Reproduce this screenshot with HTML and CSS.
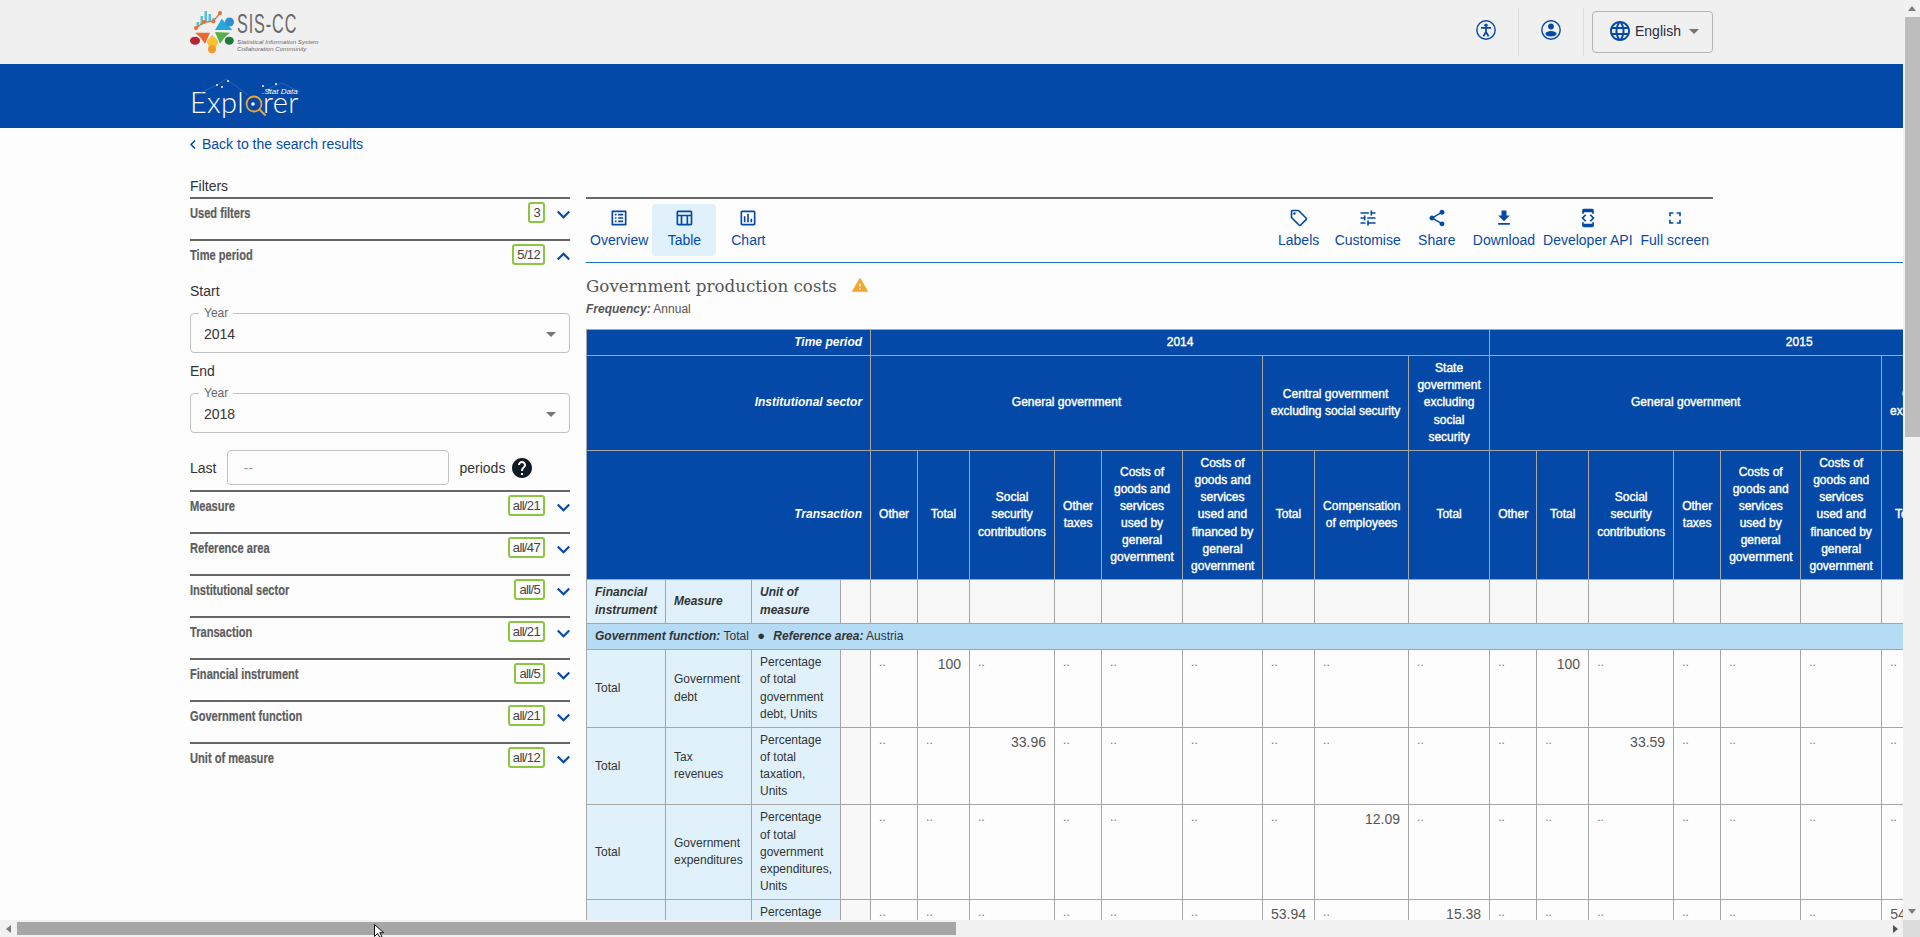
FILE: index.html
```html
<!DOCTYPE html>
<html lang="en">
<head>
  <meta charset="UTF-8">
  <title>Data Explorer - Government production costs</title>
  <link rel="stylesheet" href="styles.css">
</head>
<body>
  <div class="window">
    <div class="page">
      <header class="topbar">
        <div class="brand">
          <svg class="brand-mark" viewBox="188 6 48 48" width="48" height="48">
            <g fill="#58bfd6">
              <rect x="196.5" y="20" width="2.5" height="5"/>
              <rect x="200.5" y="14" width="2.5" height="9"/>
              <rect x="204.5" y="9" width="2.5" height="11"/>
              <rect x="208.5" y="12" width="2.5" height="7"/>
              <rect x="212.500" y="16" width="2.5" height="3"/>
            </g>
            <polyline points="196,26 204,20 213.300,19.300 220,11" fill="none" stroke="#ee6c2f" stroke-width="1.300"/>
            <g fill="#ee6c2f">
              <circle cx="196" cy="26" r="2"/>
              <circle cx="204" cy="20" r="2"/>
              <circle cx="213.300" cy="19.300" r="2"/>
              <circle cx="220" cy="11" r="2"/>
            </g>
            <path d="M215 28l6.700-11.300 5 5.500 5.800 5.800z" fill="#29a8df"/>
            <circle cx="229.500" cy="20" r="4.500" fill="#2f8fd0"/>
            <path d="M195 30.700h15l-5 11-5-6.700z" fill="#ea6a2c"/>
            <ellipse cx="195" cy="38.700" rx="5" ry="4" fill="#b8252f"/>
            <path d="M206.700 39.300l5.600-6.600 6 6.600-2.300 5.700h-7z" fill="#fbc02d"/>
            <circle cx="212" cy="47.300" r="4" fill="#f39a2e"/>
            <path d="M215 30l15 .7-5 4.300-5 6.700z" fill="#55b04a"/>
            <ellipse cx="229.300" cy="38.700" rx="4.500" ry="4" fill="#1f7a3a"/>
          </svg>
          <div class="brand-text">
            <div class="brand-name">SIS-CC</div>
            <div class="brand-sub">Statistical Information System</div>
            <div class="brand-sub">Collaboration Community</div>
          </div>
        </div>
        <div class="top-actions">
          <div class="top-icon">
            <svg viewBox="0 0 24 24" width="24" height="24">
              <circle cx="12" cy="12" r="9.200" fill="none" stroke="#0549a8" stroke-width="1.400"/>
              <circle cx="12" cy="7.300" r="1.700" fill="#0549a8"/>
              <path d="M7 9.800h10M12 9.800v4.200M12 14l-2.600 4.200M12 14l2.600 4.200" fill="none" stroke="#0549a8" stroke-width="1.700"/>
            </svg>
          </div>
          <div class="top-icon">
            <svg viewBox="0 0 24 24" width="24" height="24">
              <circle cx="12" cy="12" r="9.200" fill="none" stroke="#0549a8" stroke-width="1.400"/>
              <circle cx="12" cy="8.500" r="2.900" fill="#0549a8"/>
              <ellipse cx="12" cy="15.800" rx="5.600" ry="2.700" fill="#0549a8"/>
            </svg>
          </div>
          <div class="lang">
            <svg viewBox="0 0 24 24" width="24" height="24" fill="#0549a8"><path d="M11.990 2C6.470 2 2 6.480 2 12s4.470 10 9.990 10C17.520 22 22 17.520 22 12S17.520 2 11.990 2zm6.930 6h-2.950c-.32-1.250-.78-2.450-1.380-3.560 1.840.63 3.370 1.910 4.330 3.560zM12 4.040c.83 1.200 1.480 2.530 1.910 3.960h-3.820c.43-1.430 1.080-2.760 1.910-3.960zM4.260 14C4.100 13.360 4 12.690 4 12s.1-1.360.26-2h3.380c-.08.66-.14 1.320-.14 2 0 .68.06 1.340.14 2H4.260zm.82 2h2.950c.32 1.250.78 2.450 1.380 3.560-1.840-.63-3.370-1.900-4.330-3.560zm2.950-8H5.080c.96-1.660 2.490-2.930 4.330-3.560C8.810 5.550 8.350 6.750 8.030 8zM12 19.960c-.83-1.200-1.480-2.530-1.910-3.960h3.820c-.43 1.430-1.080 2.760-1.910 3.960zM14.340 14H9.660c-.09-.66-.16-1.320-.16-2 0-.68.07-1.350.16-2h4.680c.09.65.16 1.320.16 2 0 .68-.07 1.340-.16 2zm.25 5.560c.6-1.110 1.060-2.310 1.380-3.560h2.950c-.96 1.650-2.490 2.930-4.330 3.560zM16.360 14c.08-.66.14-1.320.14-2 0-.68-.06-1.340-.14-2h3.380c.16.64.26 1.310.26 2s-.1 1.360-.26 2h-3.380z"/></svg>
            <span>English</span>
            <i class="caret"></i>
          </div>
        </div>
      </header>

      <div class="bluebar">
        <div class="explorer">
          <svg class="stars" viewBox="0 0 110 24" width="110" height="24">
            <path d="M6 22L27 12l9-6 22 16M78 16l14-6 24 12" fill="none" stroke="#3f74bf" stroke-width=".6"/>
            <g fill="#fff">
              <circle cx="27" cy="12" r="1"/><circle cx="32" cy="14" r="1"/><circle cx="38" cy="8" r="1"/>
              <circle cx="73" cy="13" r="1"/><circle cx="79" cy="17" r="1"/><circle cx="86" cy="11" r="1"/>
            </g>
          </svg>
          <span class="stat-data">.Stat Data</span>
          <span class="explorer-word">Expl</span>
          <svg class="lens" viewBox="0 0 26 26" width="26" height="26">
            <circle cx="11" cy="10" r="7.500" fill="none" stroke="#eda32f" stroke-width="1.800"/>
            <circle cx="10" cy="10" r="1.800" fill="#fff"/>
            <path d="M16.500 15.500l6 6" stroke="#eda32f" stroke-width="2"/>
          </svg>
          <span class="explorer-word">rer</span>
        </div>
      </div>

      <a class="back" href="#">
        <svg viewBox="8 6 8 12" width="6" height="9"><path d="M15.410 7.410L14 6l-6 6 6 6 1.410-1.410L10.830 12z" fill="#0549a8"/></svg>
        Back to the search results
      </a>

      <div class="content">
        <aside class="filters">
          <div class="filters-title">Filters</div>

          <div class="filter">
            <span class="filter-name">Used filters</span>
            <span class="badge">3</span>
            <svg class="chev" viewBox="6 8 12 8" width="13" height="9"><path d="M7.410 8.590L12 13.170l4.590-4.580L18 10l-6 6-6-6z"/></svg>
          </div>

          <div class="filter filter-open">
            <div class="filter-head">
              <span class="filter-name">Time period</span>
              <span class="badge">5/12</span>
              <svg class="chev" viewBox="6 8 12 8" width="13" height="9"><path d="M12 8l6 6-1.410 1.410L12 10.830l-4.590 4.580L6 14z"/></svg>
            </div>
            <div class="field-label">Start</div>
            <fieldset class="year">
              <legend>Year</legend>
              <div class="year-value"><span>2014</span><i class="caret"></i></div>
            </fieldset>
            <div class="field-label field-label-end">End</div>
            <fieldset class="year">
              <legend>Year</legend>
              <div class="year-value"><span>2018</span><i class="caret"></i></div>
            </fieldset>
            <div class="last-row">
              <span>Last</span>
              <input class="last-input" type="text" placeholder="--">
              <span>periods</span>
              <svg viewBox="2 2 20 20" width="20" height="20" fill="#111b28"><path d="M12 2C6.480 2 2 6.480 2 12s4.480 10 10 10 10-4.480 10-10S17.520 2 12 2zm1 17h-2v-2h2v2zm2.070-7.750l-.9.92C13.450 12.900 13 13.500 13 15h-2v-.5c0-1.100.45-2.100 1.170-2.830l1.240-1.260c.37-.36.59-.86.59-1.410 0-1.100-.9-2-2-2s-2 .9-2 2H8c0-2.210 1.790-4 4-4s4 1.790 4 4c0 .88-.36 1.680-.93 2.250z"/></svg>
            </div>
          </div>

          <div class="filter">
            <span class="filter-name">Measure</span>
            <span class="badge">all/21</span>
            <svg class="chev" viewBox="6 8 12 8" width="13" height="9"><path d="M7.410 8.590L12 13.170l4.590-4.580L18 10l-6 6-6-6z"/></svg>
          </div>
          <div class="filter">
            <span class="filter-name">Reference area</span>
            <span class="badge">all/47</span>
            <svg class="chev" viewBox="6 8 12 8" width="13" height="9"><path d="M7.410 8.590L12 13.170l4.590-4.580L18 10l-6 6-6-6z"/></svg>
          </div>
          <div class="filter">
            <span class="filter-name">Institutional sector</span>
            <span class="badge">all/5</span>
            <svg class="chev" viewBox="6 8 12 8" width="13" height="9"><path d="M7.410 8.590L12 13.170l4.590-4.580L18 10l-6 6-6-6z"/></svg>
          </div>
          <div class="filter">
            <span class="filter-name">Transaction</span>
            <span class="badge">all/21</span>
            <svg class="chev" viewBox="6 8 12 8" width="13" height="9"><path d="M7.410 8.590L12 13.170l4.590-4.580L18 10l-6 6-6-6z"/></svg>
          </div>
          <div class="filter">
            <span class="filter-name">Financial instrument</span>
            <span class="badge">all/5</span>
            <svg class="chev" viewBox="6 8 12 8" width="13" height="9"><path d="M7.410 8.590L12 13.170l4.590-4.580L18 10l-6 6-6-6z"/></svg>
          </div>
          <div class="filter">
            <span class="filter-name">Government function</span>
            <span class="badge">all/21</span>
            <svg class="chev" viewBox="6 8 12 8" width="13" height="9"><path d="M7.410 8.590L12 13.170l4.590-4.580L18 10l-6 6-6-6z"/></svg>
          </div>
          <div class="filter">
            <span class="filter-name">Unit of measure</span>
            <span class="badge">all/12</span>
            <svg class="chev" viewBox="6 8 12 8" width="13" height="9"><path d="M7.410 8.590L12 13.170l4.590-4.580L18 10l-6 6-6-6z"/></svg>
          </div>
        </aside>

        <main class="main">
          <div class="tools-wrap">
            <div class="tools">
              <div class="tool-group">
                <a class="tool">
                  <svg viewBox="0 0 24 24" width="20" height="20"><path d="M19 5v14H5V5h14m1.100-2H3.900c-.5 0-.9.4-.9.9v16.200c0 .4.4.9.9.9h16.200c.4 0 .9-.5.9-.9V3.900c0-.5-.5-.9-.9-.9zM11 7h6v2h-6V7zm0 4h6v2h-6v-2zm0 4h6v2h-6zM7 7h2v2H7zm0 4h2v2H7zm0 4h2v2H7z"/></svg>
                  Overview
                </a>
                <a class="tool tool-active">
                  <svg viewBox="0 0 24 24" width="20" height="20"><path d="M20 3H5C3.900 3 3 3.900 3 5v14c0 1.100.9 2 2 2h15c1.100 0 2-.9 2-2V5c0-1.100-.9-2-2-2zm0 2v3H5V5h15zm-5 14h-5v-9h5v9zM5 10h3v9H5v-9zm12 9v-9h3v9h-3z"/></svg>
                  Table
                </a>
                <a class="tool">
                  <svg viewBox="0 0 24 24" width="20" height="20"><path d="M19 3H5c-1.100 0-2 .9-2 2v14c0 1.100.9 2 2 2h14c1.100 0 2-.9 2-2V5c0-1.100-.9-2-2-2zm0 16H5V5h14v14zM7 10h2v7H7zm4-3h2v10h-2zm4 6h2v4h-2z"/></svg>
                  Chart
                </a>
              </div>
              <div class="tool-group">
                <a class="tool">
                  <svg viewBox="0 0 24 24" width="20" height="20"><path d="M21.410 11.580l-9-9C12.050 2.220 11.550 2 11 2H4c-1.100 0-2 .9-2 2v7c0 .55.22 1.050.59 1.420l9 9c.36.36.86.58 1.410.58s1.050-.22 1.410-.59l7-7c.37-.36.59-.86.59-1.410s-.23-1.060-.59-1.420zM13 20.010L4 11V4h7v-.01l9 9-7 7.020z"/><circle cx="6.500" cy="6.500" r="1.500"/></svg>
                  Labels
                </a>
                <a class="tool">
                  <svg viewBox="0 0 24 24" width="20" height="20"><path d="M3 17v2h6v-2H3zM3 5v2h10V5H3zm10 16v-2h8v-2h-8v-2h-2v6h2zM7 9v2H3v2h4v2h2V9H7zm14 4v-2H11v2h10zm-6-4h2V7h4V5h-4V3h-2v6z"/></svg>
                  Customise
                </a>
                <a class="tool">
                  <svg viewBox="0 0 24 24" width="20" height="20"><path d="M18 16.080c-.76 0-1.440.3-1.960.77L8.910 12.700c.05-.23.09-.46.09-.7s-.04-.47-.09-.7l7.050-4.110c.54.5 1.250.81 2.040.81 1.660 0 3-1.340 3-3s-1.340-3-3-3-3 1.340-3 3c0 .24.04.47.09.7L8.040 9.810C7.500 9.310 6.790 9 6 9c-1.660 0-3 1.340-3 3s1.340 3 3 3c.79 0 1.500-.31 2.040-.81l7.120 4.160c-.05.21-.08.43-.08.65 0 1.610 1.310 2.920 2.920 2.920 1.610 0 2.920-1.310 2.920-2.920s-1.310-2.920-2.920-2.920z"/></svg>
                  Share
                </a>
                <a class="tool">
                  <svg viewBox="0 0 24 24" width="20" height="20"><path d="M19 9h-4V3H9v6H5l7 7 7-7zM5 18v2h14v-2H5z"/></svg>
                  Download
                </a>
                <a class="tool">
                  <svg viewBox="0 0 24 24" width="20" height="20"><path d="M7 5h10v2h2V3c0-1.100-.9-1.990-2-1.990L7 1c-1.100 0-2 .9-2 2v4h2V5zm8.410 11.590L20 12l-4.590-4.590L14 8.830 17.170 12 14 15.170l1.410 1.420zM10 15.170L6.830 12 10 8.830 8.590 7.410 4 12l4.590 4.590L10 15.170zM17 19H7v-2H5v4c0 1.100.9 2 2 2h10c1.100 0 2-.9 2-2v-4h-2v2z"/></svg>
                  Developer API
                </a>
                <a class="tool">
                  <svg viewBox="0 0 24 24" width="20" height="20"><path d="M7 14H5v5h5v-2H7v-3zm-2-4h2V7h3V5H5v5zm12 7h-3v2h5v-5h-2v3zM14 5v2h3v3h2V5h-5z"/></svg>
                  Full screen
                </a>
              </div>
            </div>
          </div>

          <h1 class="title">Government production costs
            <svg viewBox="0 0 24 24" width="18" height="18"><path d="M1 21h22L12 2 1 21zm12-3h-2v-2h2v2zm0-4h-2v-4h2v4z" fill="#f7a42c"/></svg>
          </h1>
          <div class="subtitle"><b>Frequency:</b> Annual</div>

          <div class="table-clip">
            <table class="data">
              <colgroup>
                <col class="w79"><col class="w86"><col class="w89"><col class="w30">
                <col class="w47"><col class="w52"><col class="w85"><col class="w47"><col class="w81"><col class="w80"><col class="w52"><col class="w94"><col class="w81">
                <col class="w47"><col class="w52"><col class="w85"><col class="w47"><col class="w80"><col class="w81"><col class="w52"><col class="w94"><col class="w81">
              </colgroup>
              <thead>
                <tr>
                  <th class="dim" colspan="4">Time period</th>
                  <th colspan="9">2014</th>
                  <th colspan="9">2015</th>
                </tr>
                <tr>
                  <th class="dim" colspan="4">Institutional sector</th>
                  <th colspan="6">General government</th>
                  <th class="tight" colspan="2">Central government excluding social security</th>
                  <th>State government excluding social security</th>
                  <th colspan="6">General government</th>
                  <th class="tight" colspan="2">Central government excluding social security</th>
                  <th>State government excluding social security</th>
                </tr>
                <tr>
                  <th class="dim" colspan="4">Transaction</th>
                  <th>Other</th><th>Total</th><th>Social security contributions</th><th>Other taxes</th>
                  <th>Costs of goods and services used by general government</th>
                  <th>Costs of goods and services used and financed by general government</th>
                  <th>Total</th><th>Compensation of employees</th><th>Total</th>
                  <th>Other</th><th>Total</th><th>Social security contributions</th><th>Other taxes</th>
                  <th>Costs of goods and services used by general government</th>
                  <th>Costs of goods and services used and financed by general government</th>
                  <th>Total</th><th>Compensation of employees</th><th>Total</th>
                </tr>
              </thead>
              <tbody>
                <tr class="col-names">
                  <td class="row-head">Financial instrument</td><td class="row-head">Measure</td><td class="row-head">Unit of measure</td>
                  <td></td><td></td><td></td><td></td><td></td><td></td><td></td><td></td><td></td><td></td>
                  <td></td><td></td><td></td><td></td><td></td><td></td><td></td><td></td><td></td>
                </tr>
                <tr>
                  <td class="section" colspan="22"><b>Government function:</b> Total <span class="dot">●</span> <b>Reference area:</b> Austria</td>
                </tr>
                <tr>
                  <td class="row-head">Total</td><td class="row-head">Government debt</td><td class="row-head">Percentage of total government debt, Units</td><td class="gap"></td>
                  <td class="nil">..</td><td class="num">100</td><td class="nil">..</td><td class="nil">..</td><td class="nil">..</td><td class="nil">..</td><td class="nil">..</td><td class="nil">..</td><td class="nil">..</td>
                  <td class="nil">..</td><td class="num">100</td><td class="nil">..</td><td class="nil">..</td><td class="nil">..</td><td class="nil">..</td><td class="nil">..</td><td class="nil">..</td><td class="nil">..</td>
                </tr>
                <tr>
                  <td class="row-head">Total</td><td class="row-head">Tax revenues</td><td class="row-head">Percentage of total taxation, Units</td><td class="gap"></td>
                  <td class="nil">..</td><td class="nil">..</td><td class="num">33.96</td><td class="nil">..</td><td class="nil">..</td><td class="nil">..</td><td class="nil">..</td><td class="nil">..</td><td class="nil">..</td>
                  <td class="nil">..</td><td class="nil">..</td><td class="num">33.59</td><td class="nil">..</td><td class="nil">..</td><td class="nil">..</td><td class="nil">..</td><td class="nil">..</td><td class="nil">..</td>
                </tr>
                <tr>
                  <td class="row-head">Total</td><td class="row-head">Government expenditures</td><td class="row-head">Percentage of total government expenditures, Units</td><td class="gap"></td>
                  <td class="nil">..</td><td class="nil">..</td><td class="nil">..</td><td class="nil">..</td><td class="nil">..</td><td class="nil">..</td><td class="nil">..</td><td class="num">12.09</td><td class="nil">..</td>
                  <td class="nil">..</td><td class="nil">..</td><td class="nil">..</td><td class="nil">..</td><td class="nil">..</td><td class="nil">..</td><td class="nil">..</td><td class="nil">..</td><td class="nil">..</td>
                </tr>
                <tr>
                  <td class="row-head"></td><td class="row-head"></td><td class="row-head row-cut">Percentage</td><td class="gap"></td>
                  <td class="nil">..</td><td class="nil">..</td><td class="nil">..</td><td class="nil">..</td><td class="nil">..</td><td class="nil">..</td><td class="num">53.94</td><td class="nil">..</td><td class="num">15.38</td>
                  <td class="nil">..</td><td class="nil">..</td><td class="nil">..</td><td class="nil">..</td><td class="nil">..</td><td class="nil">..</td><td class="num">54.12</td><td class="nil">..</td><td class="nil">..</td>
                </tr>
              </tbody>
            </table>
          </div>
        </main>
      </div>
    </div>

    <div class="vbar">
      <i class="arrow arrow-up"></i>
      <div class="vthumb"></div>
      <i class="arrow arrow-down"></i>
    </div>
  </div>

  <div class="hbar">
    <i class="arrow arrow-left"></i>
    <div class="hthumb"></div>
    <i class="arrow arrow-right"></i>
    <div class="corner"></div>
    <svg class="pointer" viewBox="0 0 13 14" width="13" height="14"><path d="M.5.5v12l3-3 2.500 4 2-1-2.300-3.800h4z" fill="#fff" stroke="#111"/></svg>
  </div>
</body>
</html>
```
FILE: styles.css
```css
* {
  box-sizing: border-box;
}

body {
  margin: 0;
  width: 1920px;
  height: 937px;
  overflow: hidden;
  background: #fdfdfd;
  color: #333;
  font-family: "Liberation Sans", Arial, sans-serif;
  font-size: 14px;
}

.window {
  display: flex;
  height: 920px;
}

.page {
  width: 1903px;
  height: 920px;
  overflow: hidden;
  flex: none;
  background: linear-gradient(#f0f0f0 64px, #fdfdfd 64px);
}

/* top bar */
.topbar {
  height: 64px;
  width: 1713px;
  padding-left: 188px;
  display: flex;
  justify-content: space-between;
  align-items: center;
}

.brand {
  display: flex;
  align-items: flex-start;
}

.brand-text {
  margin-left: 1px;
  padding-top: 4px;
  color: #6a6a6a;
}

.brand-name {
  font-size: 27px;
  line-height: 25px;
  letter-spacing: 1.5px;
  margin-bottom: 1px;
  transform: scaleX(.6);
  transform-origin: left;
}

.brand-sub {
  font-size: 6.2px;
  font-style: italic;
  line-height: 7px;
  white-space: nowrap;
}

.top-actions {
  display: flex;
  align-items: center;
}

.top-icon {
  width: 65px;
  height: 48px;
  border-right: 1px solid #dcdcdc;
  display: flex;
  align-items: center;
  justify-content: center;
  padding-bottom: 4px;
}

.lang {
  width: 121px;
  height: 42px;
  margin-left: 8px;
  padding: 0 0 2px 15px;
  border: 1px solid #b5b5b5;
  border-radius: 4px;
  display: flex;
  align-items: center;
  gap: 3px;
  color: #2b2b3a;
}

.lang .caret {
  margin-left: 5px;
}

.caret {
  width: 0;
  height: 0;
  border-left: 5px solid transparent;
  border-right: 5px solid transparent;
  border-top: 5px solid #757575;
}

/* blue bar */
.bluebar {
  height: 64px;
  background: #0549a8;
  padding: 20px 0 0 190px;
}

.explorer {
  position: relative;
  display: flex;
  width: 110px;
  height: 34px;
  color: #fff;
}

.explorer-word {
  font-family: Lato, "Open Sans", sans-serif;
  font-weight: 300;
  font-size: 29px;
  line-height: 36px;
  letter-spacing: .3px;
}

.lens {
  margin: 10px -6px 0 -1px;
  flex: none;
}

.stars {
  position: absolute;
  left: 0;
  top: -11px;
}

.stat-data {
  position: absolute;
  left: 72px;
  top: 3px;
  font-size: 8px;
  font-style: italic;
  white-space: nowrap;
}

/* back link */
.back {
  display: flex;
  align-items: center;
  gap: 6px;
  height: 32px;
  margin-bottom: 16px;
  padding-left: 190px;
  color: #0549a8;
  text-decoration: none;
}

/* layout */
.content {
  display: flex;
  padding-left: 190px;
  gap: 16px;
}

.filters {
  width: 380px;
  flex: none;
}

.filters-title {
  height: 21px;
  line-height: 21px;
}

.filter {
  border-top: 2px solid #666;
  height: 42px;
  padding-top: 3px;
  display: flex;
  align-items: flex-start;
}

.filter-open {
  height: auto;
  display: block;
  padding-bottom: 5px;
}

.filter-head {
  display: flex;
  align-items: flex-start;
  height: 37px;
}

/* the real font here is a narrow one, none is installed */
.filter-name {
  flex: 1;
  font-weight: 700;
  font-size: 15px;
  line-height: 21px;
  color: #5c5c5c;
  -webkit-text-stroke: .2px #5c5c5c;
  white-space: nowrap;
  transform: scaleX(.74);
  transform-origin: left;
}

.badge {
  height: 21px;
  padding: 0 3px;
  border: 2px solid #8cc63f;
  border-radius: 3px;
  font-size: 13px;
  letter-spacing: -.65px;
  line-height: 17px;
  color: #444;
}

.chev {
  margin: 8px 0 0 12px;
  fill: #0549a8;
}

.field-label {
  height: 20px;
  line-height: 20px;
}

.field-label-end {
  margin-top: 8px;
}

.year {
  margin: 5px 0 0;
  padding: 0 13px 0 13px;
  height: 47px;
  border: 1px solid #c2c2c2;
  border-radius: 4px;
}

.year legend {
  margin-left: -5px;
  padding: 0 5px;
  font-size: 12px;
  line-height: 14px;
  color: #666;
}

.year-value {
  display: flex;
  justify-content: space-between;
  align-items: center;
  height: 28px;
}

.last-row {
  display: flex;
  align-items: center;
  margin-top: 17px;
  height: 35px;
}

.last-input {
  width: 222px;
  height: 35px;
  margin: 0 10px 0 11px;
  padding: 0 15px;
  border: 1px solid #c2c2c2;
  border-radius: 4px;
  background: transparent;
  font: 14px "Liberation Sans", Arial, sans-serif;
}

.last-input::placeholder {
  color: #9a9a9a;
}

.last-row svg {
  margin-left: 7px;
}

/* main column */
.main {
  flex: 1;
  min-width: 0;
  padding-top: 21px;
}

.tools-wrap {
  border-bottom: 1px solid #1a6fb5;
}

.tools {
  width: 1127px;
  border-top: 2px solid #666;
  padding: 5px 0 6px;
  display: flex;
  justify-content: space-between;
}

.tool-group {
  display: flex;
}

.tool {
  min-width: 64px;
  height: 52px;
  padding: 4px 4px 0;
  border-radius: 4px;
  display: flex;
  flex-direction: column;
  align-items: center;
  gap: 4px;
  color: #0549a8;
  fill: #0549a8;
  white-space: nowrap;
  line-height: 16px;
}

.tool-active {
  background: #e0f1fb;
}

.title {
  margin: 11px 0 0;
  height: 24px;
  display: flex;
  align-items: center;
  gap: 14px;
  font-family: "DejaVu Serif", "Liberation Serif", serif;
  font-weight: 400;
  font-size: 16.7px;
  color: #555;
}

.title svg {
  margin-top: -3px;
}

.subtitle {
  margin-top: 3px;
  font-size: 12px;
  line-height: 17px;
  color: #555;
}

.subtitle b {
  font-style: italic;
}

/* table */
.table-clip {
  margin-top: 11px;
  overflow: hidden;
  height: 591px;
}

.data {
  border-collapse: collapse;
  table-layout: fixed;
  width: 1522px;
  font-size: 12px;
  line-height: 1.43;
}

.w30 { width: 30px; }
.w47 { width: 47px; }
.w52 { width: 52px; }
.w79 { width: 79px; }
.w80 { width: 80px; }
.w81 { width: 81px; }
.w85 { width: 85px; }
.w86 { width: 86px; }
.w89 { width: 89px; }
.w94 { width: 94px; }

.data th,
.data td {
  border: 1px solid #a6a6a6;
  padding: 4px 8px;
}

/* regular widths but drawn heavier, as in the original header */
.data th {
  background: #0549a8;
  color: #fff;
  font-weight: 400;
  -webkit-text-stroke: .4px #fff;
  text-align: center;
  vertical-align: middle;
}

.data th.dim {
  text-align: right;
  font-weight: 700;
  font-style: italic;
  -webkit-text-stroke: 0;
}

.data th.tight {
  padding: 4px 6px;
}

.data td {
  vertical-align: top;
  color: #555;
}

.data td.row-head {
  background: #e0f1fb;
  color: #333;
  vertical-align: middle;
}

.col-names td {
  height: 44px;
  background: #f8f8f8;
}

.col-names td.row-head {
  font-weight: 700;
  font-style: italic;
}

.data td.row-cut {
  vertical-align: top;
  height: 95px;
}

.data td.section {
  background: #b6dcf5;
  color: #333;
}

.section b {
  font-style: italic;
}

.dot {
  margin: 0 5px;
  font-size: 13px;
  line-height: 12px;
}

.data td.gap {
  background: #f8f8f8;
}

.data td.nil {
  color: #777;
}

.data td.num {
  font-size: 14px;
  text-align: right;
  color: #555;
}

/* window scrollbars, part of the screenshot */
.vbar {
  width: 17px;
  height: 920px;
  background: #f1f1f1;
  display: flex;
  flex-direction: column;
  align-items: center;
  justify-content: space-between;
  padding: 6px 0;
  position: relative;
}

.vthumb {
  position: absolute;
  top: 17px;
  left: 2px;
  right: 0;
  height: 420px;
  background: #bdbdbd;
}

.hbar {
  position: relative;
  height: 17px;
  background: #f1f1f1;
  display: flex;
  align-items: center;
}

.hthumb {
  width: 939px;
  height: 13px;
  margin-left: 6px;
  background: #a6a6a6;
}

.corner {
  position: absolute;
  right: 0;
  top: 0;
  width: 17px;
  height: 17px;
  background: #dcdcdc;
}

.pointer {
  position: absolute;
  left: 374px;
  top: 4px;
}

.arrow {
  width: 0;
  height: 0;
  border: 4px solid transparent;
}

.arrow-up {
  border-top: 0;
  border-bottom: 5px solid #7a7a7a;
}

.arrow-down {
  border-bottom: 0;
  border-top: 5px solid #7a7a7a;
}

.arrow-left {
  margin-left: 6px;
  border-left: 0;
  border-right: 5px solid #7a7a7a;
}

.arrow-right {
  position: absolute;
  left: 1893px;
  border-right: 0;
  border-left: 5px solid #505050;
}
```
